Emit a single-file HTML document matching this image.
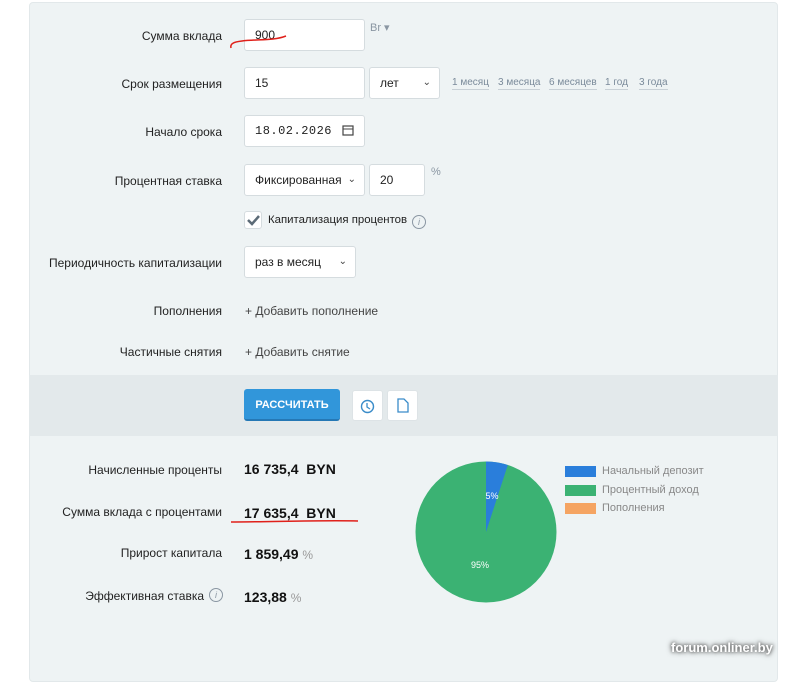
<!DOCTYPE html>
<html><head><meta charset="utf-8"><style>
*{box-sizing:border-box;margin:0;padding:0}
body{width:800px;height:669px;background:#fff;font-family:"Liberation Sans","DejaVu Sans",sans-serif;font-size:12px;color:#222;position:relative;overflow:hidden}
.panel{position:absolute;left:29px;top:2px;width:749px;height:680px;background:#eef3f4;border:1px solid #e2e8ea;border-radius:4px}
.band{position:absolute;left:29px;top:375px;width:749px;height:61px;background:#e3e9eb}
.a{position:absolute;white-space:nowrap}
.lab{position:absolute;right:578px;white-space:nowrap;font-size:12px;color:#222}
.inp{position:absolute;background:#fff;border:1px solid #d5dcdf;border-radius:3px;height:32px;font-size:12px;line-height:30px;padding-left:10px;color:#222}
.chev{position:absolute;right:8px;top:0;font-size:10px;color:#444}
.lnk{position:absolute;top:77px;font-size:10px;color:#7a8a9a;border-bottom:1px solid #c8d0d6;line-height:12px}
.big{position:absolute;left:244px;font-weight:bold;font-size:14px;color:#111}
.pct{font-weight:normal;color:#999;font-size:12px}
.add{position:absolute;left:245px;font-size:12px;color:#444}
</style></head><body>
<div class="panel"></div>
<div class="band"></div>

<div class="lab" style="top:29px">Сумма вклада</div>
<div class="inp" style="left:244px;top:19px;width:121px">900</div>
<div class="a" style="left:370px;top:21px;font-size:11px;color:#8a96a2">Br ▾</div>
<svg class="a" style="left:228px;top:28px" width="62" height="22"><path d="M3 20 C2 16 5 14 14 13 C30 11 45 13 58 8" stroke="#e0201a" stroke-width="1.5" fill="none"/></svg>

<div class="lab" style="top:77px">Срок размещения</div>
<div class="inp" style="left:244px;top:67px;width:121px">15</div>
<div class="inp" style="left:369px;top:67px;width:71px">лет<span class="chev">⌄</span></div>
<div class="lnk" style="left:452px">1 месяц</div>
<div class="lnk" style="left:498px">3 месяца</div>
<div class="lnk" style="left:549px">6 месяцев</div>
<div class="lnk" style="left:605px">1 год</div>
<div class="lnk" style="left:639px">3 года</div>

<div class="lab" style="top:125px">Начало срока</div>
<div class="inp" style="left:244px;top:115px;width:121px;font-family:'Liberation Mono',monospace;letter-spacing:0.5px">18.02.2026</div>
<svg class="a" style="left:342px;top:124px" width="12" height="12"><rect x="1" y="2" width="10" height="9" fill="none" stroke="#444" stroke-width="1.2"/><line x1="1" y1="5" x2="11" y2="5" stroke="#444"/></svg>

<div class="lab" style="top:174px">Процентная ставка</div>
<div class="inp" style="left:244px;top:164px;width:121px">Фиксированная<span class="chev">⌄</span></div>
<div class="inp" style="left:369px;top:164px;width:56px">20</div>
<div class="a" style="left:431px;top:166px;font-size:11px;color:#8a96a2">%</div>

<div class="a" style="left:244px;top:211px;width:18px;height:18px;background:#fff;border:1px solid #d5dcdf;border-radius:3px"></div>
<svg class="a" style="left:247px;top:214px" width="13" height="12"><path d="M1 6 L5 10 L12 2" stroke="#5c6b77" stroke-width="2.5" fill="none"/></svg>
<div class="a" style="left:268px;top:214px;font-size:11.4px">Капитализация процентов</div>
<div class="a" style="left:412px;top:215px;width:14px;height:14px;border:1px solid #8a96a2;border-radius:50%;font-size:9px;line-height:12px;text-align:center;color:#8a96a2;font-style:italic">i</div>

<div class="lab" style="top:256px">Периодичность капитализации</div>
<div class="inp" style="left:244px;top:246px;width:112px">раз в месяц<span class="chev">⌄</span></div>

<div class="lab" style="top:304px">Пополнения</div>
<div class="add" style="top:304px">+ Добавить пополнение</div>
<div class="lab" style="top:345px">Частичные снятия</div>
<div class="add" style="top:345px">+ Добавить снятие</div>

<div class="a" style="left:244px;top:389px;width:96px;height:32px;background:#3196da;border-bottom:2px solid #2578b5;border-radius:3px;color:#fff;font-weight:bold;font-size:11px;text-align:center;line-height:33px">РАССЧИТАТЬ</div>
<div class="a" style="left:352px;top:390px;width:31px;height:31px;background:#fff;border-radius:3px;border:1px solid #dde3e6"></div>
<svg class="a" style="left:360px;top:399px" width="15" height="15"><circle cx="7.5" cy="7.5" r="6" fill="none" stroke="#3a8cc9" stroke-width="1.4"/><path d="M7 4 V8 L10 10" stroke="#3a8cc9" stroke-width="1.3" fill="none"/></svg>
<div class="a" style="left:387px;top:390px;width:31px;height:31px;background:#fff;border-radius:3px;border:1px solid #dde3e6"></div>
<svg class="a" style="left:397px;top:398px" width="12" height="15"><path d="M1 1 H7 L11 5 V14 H1 Z" fill="none" stroke="#3a8cc9" stroke-width="1.3"/></svg>

<div class="lab" style="top:463px">Начисленные проценты</div>
<div class="big" style="top:461px">16 735,4&nbsp; BYN</div>
<div class="lab" style="top:505px">Сумма вклада с процентами</div>
<div class="big" style="top:505px">17 635,4&nbsp; BYN</div>
<svg class="a" style="left:230px;top:517px" width="130" height="8"><path d="M1 5 C40 5 90 3 128 4" stroke="#e0201a" stroke-width="1.5" fill="none"/></svg>
<div class="lab" style="top:546px">Прирост капитала</div>
<div class="big" style="top:546px">1 859,49 <span class="pct">%</span></div>
<div class="lab" style="top:589px;right:596px">Эффективная ставка</div>
<div class="a" style="left:209px;top:588px;width:14px;height:14px;border:1px solid #8a96a2;border-radius:50%;font-size:9px;line-height:12px;text-align:center;color:#8a96a2;font-style:italic">i</div>
<div class="big" style="top:589px">123,88 <span class="pct">%</span></div>

<svg class="a" style="left:414px;top:460px" width="144" height="144">
<circle cx="72" cy="72" r="70.5" fill="#3bb273"/>
<path d="M72 72 L72 1.5 A70.5 70.5 0 0 1 93.8 5 Z" fill="#2a7edb"/>
<text x="78" y="39" font-size="9" fill="#fff" text-anchor="middle" font-family="Liberation Sans">5%</text>
<text x="66" y="108" font-size="9" fill="#fff" text-anchor="middle" font-family="Liberation Sans">95%</text>
</svg>
<div class="a" style="left:565px;top:466px;width:31px;height:11px;background:#2a7edb"></div>
<div class="a" style="left:602px;top:465px;font-size:11px;color:#888">Начальный депозит</div>
<div class="a" style="left:565px;top:485px;width:31px;height:11px;background:#3bb273"></div>
<div class="a" style="left:602px;top:484px;font-size:11px;color:#888">Процентный доход</div>
<div class="a" style="left:565px;top:503px;width:31px;height:11px;background:#f5a462"></div>
<div class="a" style="left:602px;top:502px;font-size:11px;color:#888">Пополнения</div>

<div class="a" style="left:671px;top:640px;font-size:13px;font-weight:bold;color:#fff;text-shadow:0 0 3px #555,0 0 6px #555">forum.onliner.by</div>
</body></html>
